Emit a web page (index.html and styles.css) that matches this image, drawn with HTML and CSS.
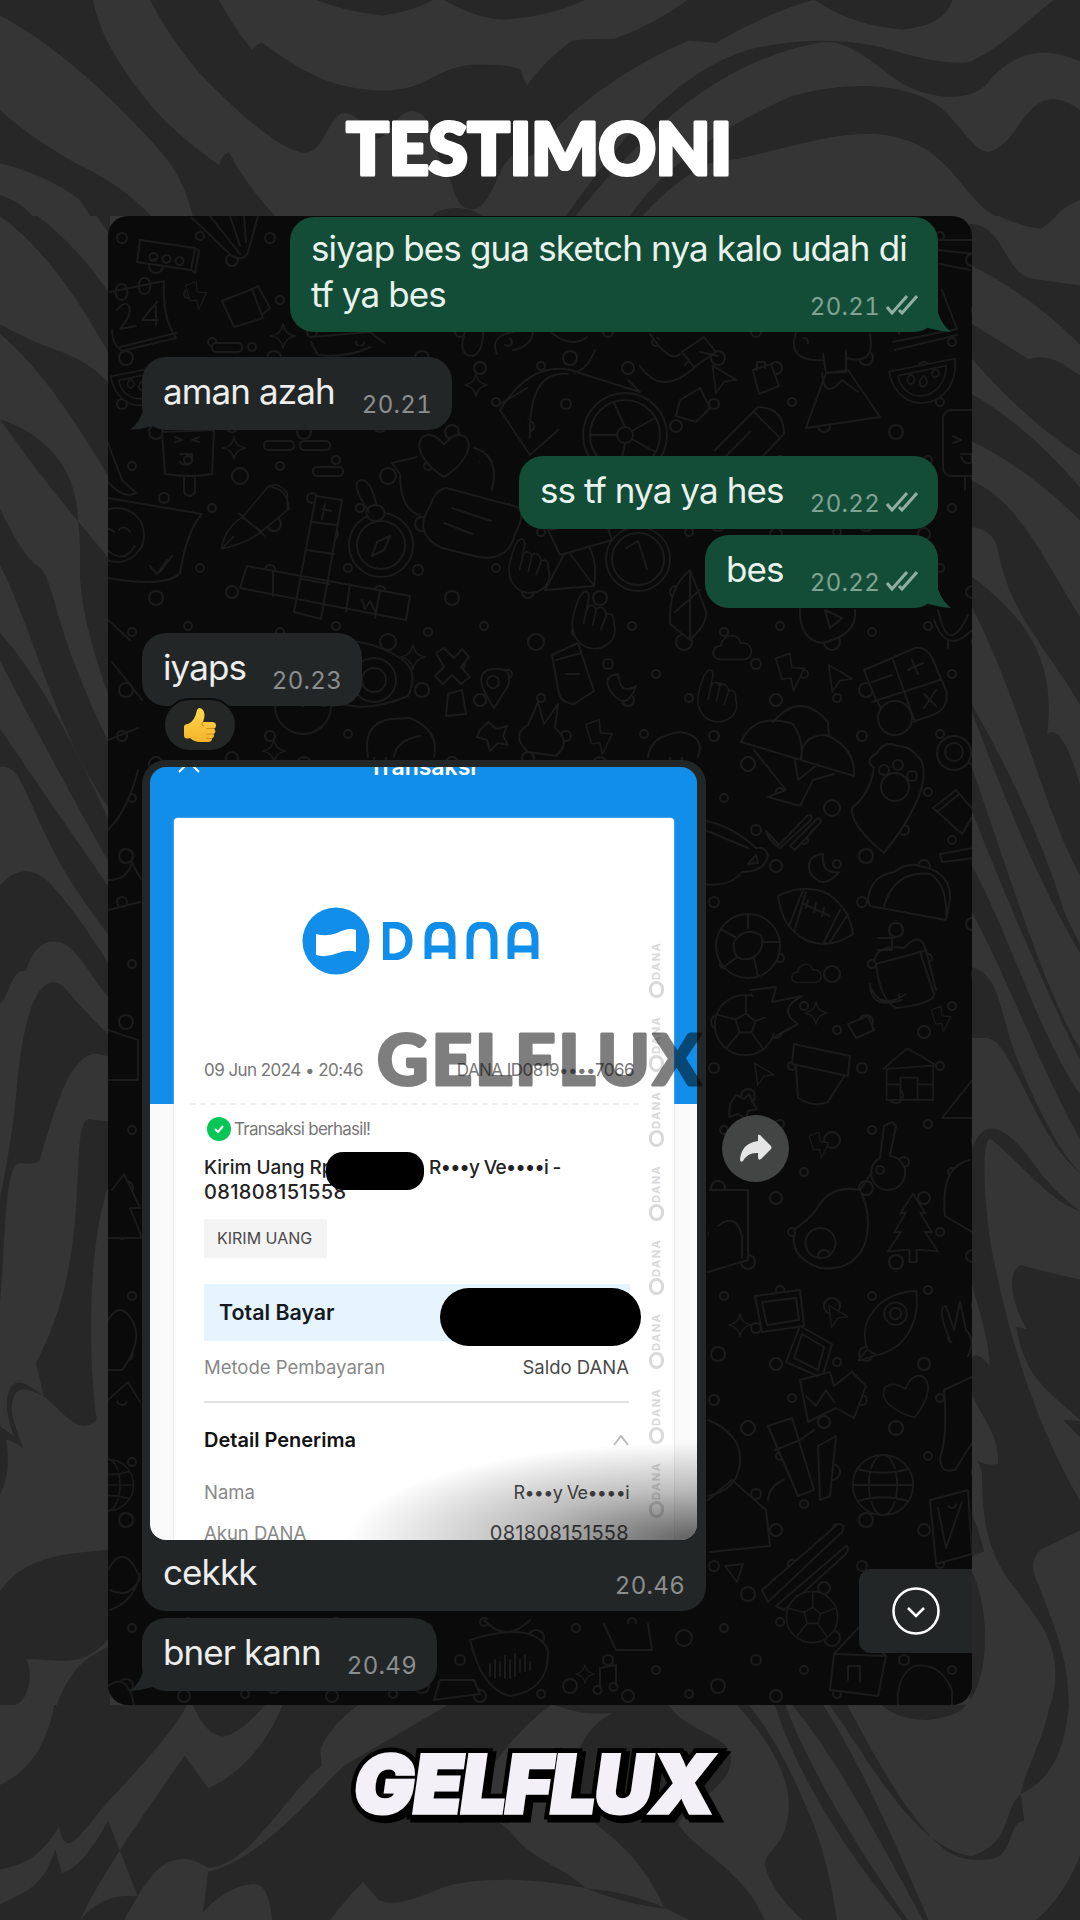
FILE: index.html
```html
<!DOCTYPE html>
<html lang="id">
<head>
<meta charset="utf-8">
<title>Testimoni Gelflux</title>
<link rel="stylesheet" href="styles.css">
</head>
<body>
<svg class="marble" width="1080" height="1920" aria-hidden="true">
  <svg x="0" y="0" width="1080" height="216" viewBox="0 0 1568 529.2" preserveAspectRatio="none">
    <path d="M0 0H135C145 90 180 180 225 270C260 335 295 375 318 405Q322 380 332 372Q360 460 400 530H280C270 460 255 410 225 355C150 215 70 100 0 38Z"/>
    <path d="M0 270C45 335 70 360 110 400Q175 450 220 530H131L116 490Q70 430 0 400ZM0 478Q30 495 48 530H0Z"/>
    <path d="M218 0H318Q340 70 366 122Q372 110 380 104C420 150 470 222 560 222C630 218 630 158 700 158Q740 158 755 170L765 210Q790 150 830 100Q850 95 892 95Q950 60 998 0H1180Q1110 35 1040 105L1000 100C920 155 830 260 790 350Q770 400 745 380C720 410 715 510 685 513C655 510 662 440 640 400C630 340 625 272 597 272C570 280 565 340 545 340C525 310 520 272 495 278C470 310 470 374 440 374C400 365 330 250 290 180Q245 90 218 0Z"/>
    <path d="M460 0Q500 28 555 38Q600 28 628 0ZM645 0Q690 45 730 48Q790 45 850 0ZM1183 0Q1240 65 1310 72Q1370 65 1383 0Z"/>
    <path d="M1530 0H1568V150C1500 100 1465 150 1440 190C1420 250 1360 250 1310 205C1270 160 1230 90 1190 105C1050 145 940 310 835 530H822C880 390 970 180 1090 120C1170 90 1240 95 1300 125C1350 150 1390 160 1410 150C1460 110 1490 50 1530 0Z"/>
    <path d="M915 530C960 410 1060 300 1150 235C1250 190 1330 210 1370 270C1400 320 1415 370 1435 372C1475 360 1485 243 1530 243Q1550 245 1568 270V490Q1540 510 1530 535H1450C1390 480 1380 340 1270 328C1190 325 1110 385 1030 400Q980 440 932 530ZM628 530C635 505 680 500 700 530Z"/>
  </svg>
  <svg x="0" y="216" width="110" height="1489" viewBox="0 14.6 330 1357.4" preserveAspectRatio="none">
    <path d="M0 0H40Q200 28 330 86V142Q160 48 0 15ZM240 0H330V32Q280 8 240 0ZM0 113Q70 126 180 138Q270 148 330 168V255Q150 160 0 122ZM0 200C120 212 230 240 235 293Q120 252 0 200M235 293L330 328V455Q250 390 240 345Q242 310 235 293"/>
    <path d="M0 282Q70 325 110 333C150 340 150 360 220 420Q270 460 330 497V556C210 505 130 430 80 390Q30 350 0 333ZM0 395Q140 440 330 568V606Q180 525 0 420ZM0 482Q130 540 330 628V672Q250 640 200 615C120 575 80 535 45 522Q20 515 0 517Z"/>
    <path d="M0 625C50 608 100 608 150 623Q220 645 330 698V728C270 710 230 675 160 676C120 676 95 687 78 703C35 700 30 725 0 733ZM0 910Q40 850 50 810C70 740 120 700 190 717Q260 742 330 762V782C230 765 180 810 120 875Q105 880 60 878C15 880 20 930 0 1005Z"/>
    <path d="M330 840L265 838C230 840 240 880 225 930C205 1000 150 1035 108 1060Q120 1075 130 1090C190 1105 240 1128 290 1112C265 1060 260 950 330 895ZM130 1090C90 1085 35 1075 35 1105Q45 1120 70 1138Q45 1132 18 1130Q35 1160 0 1180V1118L42 1127Q20 1110 20 1095C35 1065 90 1082 130 1090"/>
    <path d="M0 1268C80 1235 190 1235 330 1230V1310C250 1340 180 1330 78 1330C105 1345 80 1372 40 1372H0ZM330 1318C250 1330 200 1340 150 1390Q90 1430 0 1445V1500H330Z"/>
  </svg>
  <svg x="970" y="216" width="110" height="1489" viewBox="6 14.6 330 1357.4" preserveAspectRatio="none">
    <path d="M0 0Q150 26 220 26Q260 18 310 0ZM6 22C110 22 110 70 200 72L336 78V132Q190 87 6 59ZM6 112Q120 133 180 145C260 140 280 150 336 160V233Q170 200 6 143ZM6 176Q180 206 336 262V292Q180 245 6 219ZM6 255C160 275 240 335 336 380V460C230 405 130 380 90 320Q80 300 6 298Z"/>
    <path d="M6 342C150 375 250 410 242 470L238 487Q280 475 336 533V616C220 550 150 450 6 368ZM6 457Q200 560 290 650L336 679V686Q200 620 6 462ZM6 512C140 630 230 720 336 774V784Q170 680 6 553ZM6 604C120 665 210 760 336 815V856C230 800 120 710 6 646Z"/>
    <path d="M6 699C100 705 90 740 150 785Q250 860 336 887C190 850 130 760 50 764H6ZM6 872C40 830 120 845 200 880Q250 902 336 922C240 912 150 875 68 856C35 855 50 930 80 970C140 1060 230 1130 336 1186V1213L220 1230C190 1238 190 1248 205 1258C260 1300 302 1330 302 1370C300 1420 220 1442 157 1453C190 1400 262 1380 262 1345C262 1310 210 1295 140 1265C60 1235 42 1205 42 1160Q35 1152 25 1148Q50 1155 90 1152C95 1125 40 1110 6 1085V1060Q20 1045 65 1063C65 1040 30 1010 6 982Z"/>
    <path d="M6 1195Q25 1205 48 1232L6 1237ZM336 984Q200 975 160 971C120 975 120 1000 178 1030L145 1027C170 1075 240 1085 336 1112ZM285 1112L336 1113V1128ZM6 1247C65 1280 68 1340 6 1368Z"/>
  </svg>
  <svg x="0" y="1705" width="1080" height="215" viewBox="0 1041 1568 527" preserveAspectRatio="none">
    <path d="M79 1041H272C245 1120 200 1200 157 1277C130 1330 110 1385 97 1379Q88 1370 86 1339C60 1410 40 1430 0 1444V1237Q62 1190 79 1041ZM280 1041Q300 1118 325 1118Q350 1110 385 1041Z"/>
    <path d="M410 1041H520Q480 1090 465 1150L467 1190C420 1250 360 1440 302 1440C240 1370 210 1480 180 1568H116Q150 1500 200 1510L157 1325Q120 1440 90 1453L80 1396C60 1500 30 1500 0 1531V1568H116C150 1450 200 1330 268 1165L302 1245C350 1210 390 1130 410 1041Z"/>
    <path d="M650 1041H800C750 1100 710 1200 690 1250Q700 1300 740 1350C770 1420 820 1440 850 1490C760 1460 680 1465 640 1490Q560 1550 545 1510L527 1475Q500 1520 480 1568H395Q390 1480 370 1480C350 1480 320 1500 295 1550L302 1450C380 1420 460 1250 500 1190Q600 1090 650 1041ZM805 1041Q850 1070 890 1060C820 1120 820 1270 870 1340C920 1400 950 1480 965 1540Q910 1530 850 1490Q930 1500 1000 1568H1110C1080 1440 1000 1390 985 1330C1010 1270 1070 1230 1060 1160C1050 1110 1000 1110 970 1041Z"/>
    <path d="M1070 1041Q1150 1190 1145 1300C1140 1390 1115 1390 1110 1430Q1120 1500 1165 1568H1215Q1200 1390 1165 1270Q1130 1130 1087 1041ZM1125 1041Q1170 1280 1310 1568H1318Q1190 1260 1140 1041ZM1150 1041C1210 1160 1270 1350 1340 1568H1348C1280 1300 1240 1160 1195 1041ZM1205 1041C1270 1200 1330 1390 1410 1412C1470 1380 1455 1300 1482 1259L1487 1325C1460 1330 1475 1420 1430 1420Q1400 1425 1375 1400C1320 1330 1265 1150 1230 1041ZM1280 1041Q1300 1075 1345 1078Q1390 1070 1403 1041Z"/>
    <path d="M1568 1410Q1545 1510 1504 1568H1568ZM1552 1041C1545 1150 1530 1220 1482 1259C1490 1190 1515 1130 1524 1041Z"/>
  </svg>
</svg>

<main class="poster">
  <h1 class="title"><svg width="400" height="72" viewBox="0 0 400 72"><text x="6" y="59" textLength="386" lengthAdjust="spacing">TESTIMONI</text></svg></h1>

  <section class="chat">
    <svg class="doodles" viewBox="108 216 864 1489" aria-hidden="true">
      <defs>
        <pattern id="rings" width="148" height="166" patternUnits="userSpaceOnUse" patternTransform="translate(108 216)">
          <g class="ink"><circle cx="14" cy="22" r="5"/><circle cx="48" cy="50" r="7"/><circle cx="92" cy="20" r="4"/><circle cx="124" cy="44" r="6"/><circle cx="24" cy="84" r="4"/><circle cx="80" cy="78" r="4"/><circle cx="132" cy="94" r="8"/><circle cx="56" cy="116" r="5"/><circle cx="104" cy="126" r="4"/><circle cx="18" cy="142" r="7"/><circle cx="76" cy="152" r="6"/><circle cx="137" cy="150" r="4"/></g>
        </pattern>
        <symbol id="bolt" viewBox="0 0 36 46" overflow="visible"><path d="M2 8L18 2L20 18L34 19L22 44L19 30L9 31Z"/></symbol>
        <symbol id="spark" viewBox="0 0 30 30" overflow="visible"><path d="M15 1Q17 13 29 15Q17 17 15 29Q13 17 1 15Q13 13 15 1Z"/></symbol>
        <symbol id="cloud" viewBox="0 0 44 30" overflow="visible"><path d="M8 28C-2 27 0 13 9 14C12 0 28 0 30 11C42 8 46 26 34 28Z"/></symbol>
        <symbol id="cursor" viewBox="0 0 30 34" overflow="visible"><path d="M2 2L29 18L15 20L6 33Z"/></symbol>
        <symbol id="pen" viewBox="0 0 90 90" overflow="visible"><path d="M4 84Q8 60 28 48L58 12Q80 14 82 38L50 64Q34 78 4 84ZM28 48L50 64M4 84L18 70M24 43L54 69M58 12Q70 6 80 20V38"/></symbol>
        <symbol id="ball" viewBox="0 0 70 70" overflow="visible"><circle cx="35" cy="35" r="32"/><path d="M25 29L36 23L46 31L42 43H29ZM36 23V4M46 31L64 24M42 43L54 60M29 43L16 59M25 29L5 24"/></symbol>
        <symbol id="globe" viewBox="0 0 70 70" overflow="visible"><circle cx="35" cy="35" r="32"/><ellipse cx="35" cy="35" rx="15" ry="32"/><path d="M3 35H67M8 18Q35 26 62 18M8 52Q35 44 62 52"/></symbol>
        <symbol id="heart" viewBox="0 0 60 52" overflow="visible"><path d="M30 48C-16 18 10-12 30 14C50-12 76 18 30 48Z"/></symbol>
        <symbol id="hand" viewBox="0 0 60 70" overflow="visible"><path d="M14 62C-2 48 6 28 12 12Q20-1 23 10L20 26Q24 15 31 24Q38 18 42 30Q51 27 50 40C57 60 32 76 14 62ZM20 26L17 40M31 24L27 42M42 30L36 46"/></symbol>
        <symbol id="melon" viewBox="0 0 80 60" overflow="visible"><path d="M2 18L78 3C84 62 12 74 2 18ZM12 23L68 11C67 52 20 58 12 23M27 33q-8-4 0-12q9 7 0 12M41 36q-8-5 1-13q8 8-1 13M55 25q-8-5 1-10q8 6-1 10"/></symbol>
        <symbol id="house" viewBox="0 0 72 66" overflow="visible"><path d="M6 26L34 2L68 22M10 26V62H64V22M26 62V36H46V62M10 26L64 22M10 44H26M46 44H64"/></symbol>
        <symbol id="rocket" viewBox="0 0 70 80" overflow="visible"><path d="M12 66C0 32 30 4 64 4C68 40 50 66 22 72ZM12 66L2 78L22 72"/><circle cx="42" cy="28" r="12"/><circle cx="42" cy="28" r="6"/></symbol>
        <symbol id="tree" viewBox="0 0 60 80" overflow="visible"><path d="M30 2L44 24L38 23L51 45L43 44L58 66L34 64V78H26V64L2 66L17 44L9 45L22 23L16 24Z"/></symbol>
      </defs>
      <rect x="108" y="216" width="864" height="1489" fill="url(#rings)"/>
      <g class="ink">
        <path d="M140 240l55 8-4 22-54-8zM195 248l4 3-4 22-4-3M153 253a4 4 0 1 0 1 0M166 255a4 4 0 1 0 1 0M179 257a4 4 0 1 0 1 0"/>
        <path d="M192 218L232 256Q244 262 248 252L258 216M210 216L240 254M230 216L240 246M244 216L246 242"/>
        <path d="M110 292L164 281Q162 318 176 338L122 351Q112 345 112 330M120 347L176 333M121 284a6 8 0 1 0 1 0M144 278a6 8 0 1 0 1 0"/>
        <path d="M117 310Q125 300 129 306Q132 315 120 329L136 326M157 302L142 320H158M156 306V325"/>
        <use href="#bolt" x="184" y="280" width="24" height="31"/><path d="M222 301L252 289L263 318L234 327ZM252 289L258 286L270 308L263 314"/>
        <use href="#spark" x="270" y="322" width="26" height="28"/><rect x="212" y="343" width="30" height="9" rx="4"/><circle cx="252" cy="347" r="4"/>
        <path d="M311 337L370 332L384 343M311 342L318 355Q348 358 370 347M465 332q-8 24 8 24q10-4 10-24M497 354q-8-18 16-22M513 350q20-4 20-20"/>
        <use href="#melon" x="108" y="362" width="66" height="48"/><use href="#spark" x="464" y="372" width="24" height="26"/>
        <path d="M162 432L165 474Q190 478 212 474L214 430ZM184 478V492Q190 500 195 492V478M175 437l7 3-7 2M199 437l-7 3 7 2M180 454h12v8q-7 6-12 0"/>
        <use href="#spark" x="222" y="434" width="24" height="28"/><rect x="264" y="441" width="30" height="9" rx="4"/><rect x="300" y="441" width="30" height="9" rx="4"/><rect x="313" y="467" width="30" height="9" rx="4"/>
        <path d="M108 443L122 480L136 493Q124 500 108 482M108 498L202 514Q187 530 180 573Q166 588 108 578"/><circle cx="117" cy="535" r="27"/><path d="M150 566l7 8 10-14M160 572l12-16M104 532q5-6 10 0M119 530q5-6 11 2M105 548q18 18 30-2"/>
        <use href="#pen" x="216" y="476" width="82" height="78"/>
        <path d="M316 496L342 500L321 619L294 612ZM312 522l26 3M307 550l27 4M302 579l27 5M247 566L410 596L406 620L240 588ZM273 571v25M350 584l-4 27M380 590l-5 28M322 509l9 2M325 504l-3 15M362 600l3 9 5-8 5 10"/>
        <circle cx="381" cy="545" r="32"/><circle cx="381" cy="545" r="24"/><path d="M390 536L384 550L372 556L377 542ZM369 512q-20-30-8-32 10 0 15 24M375 505a9 8 0 1 0 1 0"/>
        <use href="#heart" x="414" y="431" width="60" height="50"/><path d="M392 463L417 457M420 515Q400 510 400 474L392 463M474 448Q500 455 492 490"/><path d="M446 488L514 506Q528 510 515 534Q508 562 478 557L442 548Q412 534 430 506Q435 490 446 488M452 508l39 13M444 523l28 11"/>
        <path d="M500 410Q530 362 570 370L640 392L628 380M530 438Q528 370 568 374M500 410L530 455L558 430M497 406l30-18"/><circle cx="625" cy="435" r="42"/><circle cx="625" cy="435" r="35"/><circle cx="625" cy="435" r="8"/><path d="M625 427L614 403M632 431L655 418M632 439L655 452M625 443L620 468M617 435H590"/>
        <path d="M552 333q20 16 35 4M595 350q-8 20-20 22M650 334q20 30 30 20M640 366q22 32 56 0M682 352l22-15 12 15-22 15zM700 352l18 4"/>
        <use href="#cursor" x="710" y="364" width="28" height="30"/><path d="M753 370l18-6 8 22-20 8zM757 370v-8h8v6"/>
        <path d="M680 400l20-12 10 20-14 14-20-6z"/><path d="M715 450L758 407Q784 408 784 434L740 480M754 412L780 438M750 432L726 456"/>
        <path d="M826 373L806 428L880 417L848 370ZM822 373Q824 396 836 386L842 380L858 392M823 354L826 373L846 372V350M796 332q-10 30 27 28M846 358q30 8 24-24"/>
        <use href="#melon" x="884" y="356" width="76" height="52"/><path d="M893 342L957 329L942 290M895 350L957 335"/><rect x="943" y="410" width="52" height="66" rx="8"/><path d="M965 476V490M953 436l8 4-8 3M961 454h11v8q-7 4-11-5M938 240H974M938 250L975 254M940 264L970 270"/>
        <path d="M545 590L576 532Q600 550 594 586ZM560 540L594 586"/><path d="M548 530L605 520L612 540L560 555Z"/><circle cx="638" cy="559" r="32"/><circle cx="638" cy="559" r="26"/><path d="M626 548l12-7 9 28"/>
        <use href="#hand" x="505" y="534" width="52" height="62"/><use href="#hand" x="568" y="586" width="55" height="66"/><use href="#hand" x="694" y="665" width="50" height="60"/>
        <path d="M670 624Q668 588 690 570L704 606Q712 620 690 640ZM690 570V640M675 612L700 590"/>
        <use href="#spark" x="400" y="640" width="26" height="34"/><path d="M342 640Q376 642 400 658Q420 670 408 696Q370 712 342 704"/><circle cx="374" cy="680" r="22"/><circle cx="374" cy="680" r="12"/>
        <path d="M436 653l8-5 10 10 8-9 7 8-8 10 9 10-9 7-9-9-9 9-8-8 9-9z"/><path d="M552 655l26-12 16 48-20 13q-12-1-15-10zM556 660l25-7M566 674h13"/><path d="M494 708Q472 676 488 670Q514 664 508 686Z"/><circle cx="493" cy="682" r="6"/><path d="M610 690q16 24 26-4q-16 10-18-12q-16 2-8 16M448 694l14-4 4 24-20 2z"/>
        <circle cx="303" cy="706" r="28"/><path d="M303 706l10-9M303 685v4M322 706h4"/><use href="#spark" x="262" y="738" width="24" height="26"/><path d="M368 757Q362 724 390 719L410 718Q440 730 434 757M394 757Q396 740 420 736"/><path d="M528 752Q510 735 528 725L538 702 544 724 558 704 555 728Q572 742 556 756Z"/><use href="#bolt" x="584" y="718" width="30" height="38"/><path d="M480 730l8-8 9 7 10-3-4 10 5 9-10-2-8 8-3-11-10-3z"/><path d="M648 757Q650 736 680 732Q706 736 698 757"/>
        <use href="#cloud" x="712" y="632" width="42" height="30"/><path d="M800 605Q798 640 822 643Q858 635 855 610M825 610L830 628L842 618Z"/><path d="M938 610Q948 658 968 615M934 620Q947 656 972 630M948 640v8"/>
        <use href="#bolt" x="774" y="650" width="32" height="44"/><use href="#cursor" x="827" y="663" width="26" height="30"/>
        <path d="M864 670L915 648Q926 646 932 658L946 690Q950 710 930 716L900 726Q884 715 876 700ZM893 660L915 722M872 702L940 680M908 670l15-7M912 660l6 14M924 694l12 12M936 690l-12 18M872 682l20-7"/><circle cx="895" cy="718" r="17"/>
        <path d="M741 742Q754 712 793 724Q804 740 801 760ZM773 722Q800 690 828 722L829 736M801 760Q800 735 826 735Q856 748 854 776ZM754 750L786 790L768 797L800 806L813 780L834 774M795 760L798 780L818 764"/>
        <path d="M874 768Q864 760 877 753Q884 740 898 746Q912 746 922 762Q932 792 884 853Q850 825 852 808Q870 794 874 768"/><circle cx="895" cy="787" r="14"/><circle cx="884" cy="770" r="5"/><circle cx="898" cy="765" r="5"/><circle cx="912" cy="776" r="5"/>
        <circle cx="954" cy="753" r="17"/><circle cx="954" cy="752" r="9"/><path d="M933 808L956 790L975 812L962 834ZM937 812L958 795M940 854L974 848V858L942 862Z"/>
        <path d="M766 831l13 14 28-29q6-3 4 4L780 848q-12-8-14-17M790 846l28-28q6 2-1 8L795 850z"/>
        <path d="M700 820Q730 824 756 848Q766 846 768 856Q764 872 742 872Q730 888 700 884M700 828L748 848M748 864l8-9 2 8z"/>
        <path d="M823 854q-18 2-13 18q12 20 29 0q-18 2-16-18"/><path d="M778 896Q806 882 830 895Q850 910 853 934Q830 950 806 940Q782 928 778 896ZM803 890L789 926M806 892L794 932M848 914L830 942M840 910L824 942M804 904L830 916M808 900l-2 8M816 903l-2 9M824 908l-2 8"/>
        <path d="M868 900Q870 876 894 872Q908 862 920 866Q952 872 950 900L946 920L870 906ZM884 906Q895 870 930 874Q948 884 946 920"/>
        <circle cx="748" cy="946" r="32"/><path d="M734 942Q744 926 761 935Q766 950 752 958Q732 964 734 942M748 914v14M778 942h-14M725 966l11-8M758 976l-4-18M722 930l13 7"/>
        <path d="M876 964L920 952L934 994Q934 1004 896 1008Q880 1000 876 964M920 952L926 950 936 990M874 962Q876 944 904 948Q920 930 926 950M878 938h14v12h-14M870 984Q870 1010 902 1000M872 990q10 20 34 4"/>
        <use href="#cloud" x="790" y="962" width="34" height="22"/><use href="#ball" x="712" y="992" width="66" height="66"/><path d="M750 990L776 987L772 1002L802 996Q776 1010 798 1024L776 1036"/><use href="#spark" x="804" y="1000" width="24" height="26"/><use href="#bolt" x="930" y="1004" width="22" height="30"/><path d="M848 1024l20-8 6 14-18 8z"/>
        <path d="M794 1044L850 1056L848 1076L792 1064ZM796 1066L798 1098Q814 1108 828 1102L845 1075"/><use href="#house" x="878" y="1042" width="62" height="66"/><use href="#cursor" x="752" y="1062" width="24" height="24"/>
        <path d="M942 1118L974 1078V1118Z"/><path d="M730 1104l6-9 8 4 5-5 4 9 4 6-9 2-2 8-8-5-9 3z"/><use href="#bolt" x="808" y="1130" width="22" height="30"/><path d="M884 1126l8-4 4 4-6 30a17 17 0 1 1-10 2z"/><circle cx="880" cy="1170" r="4"/>
        <path d="M816 1210Q830 1184 860 1190Q872 1214 866 1240Q856 1272 820 1268Q786 1256 796 1228Q806 1222 816 1210ZM820 1228a15 15 0 1 0 1 0M860 1190L872 1172M945 1216Q940 1166 970 1160M945 1216L972 1232"/>
        <use href="#tree" x="886" y="1190" width="54" height="76"/><path d="M710 1190H748V1260L708 1272M718 1226q18-14 24 10v22"/>
        <path d="M755 1296L800 1290L804 1326L762 1332ZM762 1302L796 1298L799 1320L767 1325ZM800 1326L832 1344L822 1378L786 1362ZM802 1334L824 1347L818 1370L794 1358Z"/><use href="#rocket" x="856" y="1286" width="66" height="78"/><path d="M950 1340Q936 1308 946 1306L954 1330 960 1302 966 1330Q976 1340 968 1356"/>
        <use href="#spark" x="728" y="1311" width="24" height="28"/><use href="#cursor" x="826" y="1304" width="24" height="24"/><path d="M800 1380l30-8 4 14 18-14 14 14-12 32-18-10-28 14zM806 1396l10 10 10-16 8 12"/>
        <use href="#heart" x="882" y="1376" width="54" height="46" transform="rotate(-18 909 1400)"/><path d="M944 1390L974 1376V1440L955 1470Q940 1474 940 1458Q948 1436 944 1390"/>
        <path d="M768 1426L792 1418L814 1490L798 1496ZM775 1450L800 1440 814 1430M784 1480Q770 1485 768 1500M818 1446L836 1436 830 1496 820 1500Z"/><use href="#globe" x="850" y="1450" width="66" height="70"/><path d="M708 1420q34 14 32 42t-32 34M708 1500l24-20 34 30 4 36-60 6"/><path d="M930 1500L968 1490 972 1554 936 1564ZM938 1508l8 40 16-46"/>
        <path d="M762 1590L838 1524Q846 1524 842 1532L768 1602ZM776 1606L846 1546Q850 1548 846 1554L784 1610Z"/><use href="#ball" x="784" y="1588" width="56" height="58"/><path d="M725 1566l18-2-6 18z"/>
        <use href="#globe" x="80" y="1452" width="56" height="66"/><path d="M108 1570Q124 1540 140 1578Q130 1600 110 1590M110 1610q24-8 30-36"/>
        <path d="M470 1640Q534 1620 548 1650Q550 1690 510 1696Q482 1690 470 1640ZM490 1664v12M495 1660v18M500 1662v14M505 1656v22M510 1660v18M515 1654v22M520 1660v12M525 1655v16M530 1662v8"/>
        <path d="M484 1620q22 24 46 0M604 1624l12 26 36 0-4-26M830 1690L834 1654 858 1628 886 1656 878 1696ZM834 1654L886 1656M848 1680v-14h12v16M600 1668v20M600 1668l16-3v20M597 1686a4 4 0 1 0 1 0M613 1683a4 4 0 1 0 1 0"/><use href="#spark" x="575" y="1664" width="20" height="20"/>
        <path d="M898 1705Q896 1676 914 1666 940 1662 952 1690V1705M434 1700l6-20h34l6 14zM108 1686q20-14 26 19"/>
        <path d="M108 620L130 640M112 662L142 700M108 740l30-12M108 830q20-20 30-60M108 880q20 0 24-18 10 22 14 20M108 910l32-8M108 1030l30 10v40h-30M112 1190l12-16 16 34-10 0 12 30h-34M108 1320q12-20 24 0t-10 50l-14 0M108 1400l20-18 12 20"/>
      </g>
    </svg>

    <div class="bubble out first">
      <p class="msg">siyap bes gua sketch nya kalo udah di<br>tf ya bes</p>
      <span class="time">20.21</span><svg class="ticks" viewBox="0 0 32 20"><path d="M1 12L6 18L21 1M13 15L16 18L31 1"/></svg>
      <svg class="tail right" viewBox="0 0 26 28"><path d="M13 0V9Q17 21 26 28Q14 27 3 24L0 16Z"/></svg>
    </div>
    <div class="bubble in b2">
      <p class="msg">aman azah</p><span class="time">20.21</span>
      <svg class="tail left" viewBox="0 0 26 28"><path d="M13 0V9Q9 21 0 28Q12 27 23 24L26 16Z"/></svg>
    </div>
    <div class="bubble out b3">
      <p class="msg">ss tf nya ya hes</p><span class="time">20.22</span><svg class="ticks" viewBox="0 0 32 20"><path d="M1 12L6 18L21 1M13 15L16 18L31 1"/></svg>
    </div>
    <div class="bubble out b4">
      <p class="msg">bes</p><span class="time">20.22</span><svg class="ticks" viewBox="0 0 32 20"><path d="M1 12L6 18L21 1M13 15L16 18L31 1"/></svg>
      <svg class="tail right" viewBox="0 0 26 28"><path d="M13 0V9Q17 21 26 28Q14 27 3 24L0 16Z"/></svg>
    </div>
    <div class="bubble in b5">
      <p class="msg">iyaps</p><span class="time">20.23</span>
      <span class="reaction"><svg width="34" height="36" viewBox="0 0 34 36">
        <defs><linearGradient id="skin" x2="0" y2="1"><stop stop-color="#ffd84e"/><stop offset="1" stop-color="#f6b32b"/></linearGradient></defs>
        <path fill="url(#skin)" d="M14 3Q16-1 20 3Q23 7 20 15H29Q33 15 33 18.500Q33 21 31 21.500Q34 25 30.500 27Q32 30 29 31.500Q29 35 25 35H17Q11 35 7 31Q1 33 1 28V20Q1 17 5 17Q12 14 14 3Z"/>
        <path class="crease" d="M31 21.500H23M30.500 27H23M29 31.500H23M20 15Q17 18 21 19"/></svg></span>
    </div>

    <article class="bubble photo">
      <div class="shot">
        <div class="appbar"><svg width="22" height="22" viewBox="0 0 22 22"><path d="M1 1L21 21M21 1L1 21"/></svg><span>Transaksi</span></div>
        <div class="receipt">
          <div class="brand">
            <svg width="68" height="68" viewBox="0 0 68 68"><circle cx="34" cy="34" r="33.500" fill="#118eea"/><path fill="#fff" d="M14 27Q24 30 35 26Q47 20 54 23V45Q47 42 36 46Q24 51 14 48Z"/></svg>
            <svg class="wordmark" role="img" aria-label="DANA" width="157" height="38" viewBox="0 0 157 38"><path d="M3 3H12Q26 5 26 19T12 35H3ZM45 37V17Q45 3 57 3T69 17V37M45 27H69M87 37V17Q87 3 99 3T111 17V37M128 37V17Q128 3 140 3T152 17V37M128 27H152"/></svg>
          </div>
          <div class="meta"><span>09 Jun 2024 • 20:46</span><span>DANA ID0819••••7066</span></div>
          <div class="ok"><svg width="24" height="24" viewBox="0 0 24 24"><circle cx="12" cy="12" r="12" fill="#06c755"/><path d="M8 12L11 15L16 9" fill="none" stroke="#fff" stroke-width="2"/></svg><span>Transaksi berhasil!</span></div>
          <div class="summary"><span>Kirim Uang Rp</span><i class="redact small"></i><span class="payee">R•••y Ve••••i -</span><br><span class="phone">081808151558</span></div>
          <div class="chip">KIRIM UANG</div>
          <div class="total"><span>Total Bayar</span><i class="redact"></i></div>
          <div class="row method"><span class="muted">Metode Pembayaran</span><span>Saldo DANA</span></div>
          <div class="row detail"><b>Detail Penerima</b><svg width="16" height="11" viewBox="0 0 16 11"><path d="M1 10L8 1L15 10"/></svg></div>
          <div class="row name"><span class="muted">Nama</span><span class="masked">R•••y Ve••••i</span></div>
          <div class="row account"><span class="muted">Akun DANA</span><span class="number">081808151558</span></div>
          <div class="strip"><span>DANA</span><i></i><span>DANA</span><i></i><span>DANA</span><i></i><span>DANA</span><i></i><span>DANA</span><i></i><span>DANA</span><i></i><span>DANA</span><i></i><span>DANA</span><i></i></div>
        </div>
        <div class="shade"></div>
      </div>
      <div class="caption"><p class="msg">cekkk</p><span class="time">20.46</span></div>
      <svg class="watermark" width="336" height="66" viewBox="0 0 336 66"><text x="5" y="57" textLength="324" lengthAdjust="spacing">GELFLUX</text></svg>
      <span class="share"><svg width="32" height="29" viewBox="0 0 32 29"><path d="M18 1Q20 0 21 2L31 12Q32 14 31 15L21 25Q18 27 18 23V19Q8 18 3 27Q0 29 0 25Q2 9 18 7Z"/></svg></span>
    </article>

    <div class="bubble in b7">
      <p class="msg">bner kann</p><span class="time">20.49</span>
      <svg class="tail left" viewBox="0 0 26 28"><path d="M13 0V9Q9 21 0 28Q12 27 23 24L26 16Z"/></svg>
    </div>
    <span class="down"><svg width="50" height="50" viewBox="0 0 50 50"><circle cx="25" cy="25" r="22.500"/><path d="M17 22L25 30L33 22"/></svg></span>
  </section>

  <footer class="logo"><svg width="400" height="90" viewBox="0 0 400 90">
    <g transform="translate(11 74) skewX(-8)"><text class="back" x="4" y="3" textLength="360" lengthAdjust="spacing">GELFLUX</text><text class="back" x="0" y="0" textLength="360" lengthAdjust="spacing">GELFLUX</text><text class="front" x="0" y="0" textLength="360" lengthAdjust="spacing">GELFLUX</text></g>
  </svg></footer>
</main>
</body>
</html>
```
FILE: styles.css
```css
* { box-sizing: border-box; }
body { margin: 0; width: 1080px; height: 1920px; overflow: hidden; background: #353535; font-family: Inter, "Liberation Sans", sans-serif; }
p, h1 { margin: 0; font-weight: 400; }
.marble { position: absolute; inset: 0; fill: #272727; }
.poster { position: relative; display: flex; flex-direction: column; align-items: center; height: 1920px; }
.title { height: 216px; padding-top: 116px; }
.title svg { display: block; overflow: visible; }
.title text { font: 800 71px Lato, sans-serif; fill: #fff; stroke: #fff; stroke-width: 3; stroke-linejoin: round; }

.chat { position: relative; width: 864px; height: 1489px; background: #0a0a0a; border-radius: 20px; overflow: hidden; display: flex; flex-direction: column; align-items: flex-start; padding: 1px 34px 0; }
.doodles { position: absolute; inset: 0; width: 864px; height: 1489px; }
.ink { fill: #0a0a0a; stroke: #1b1b1b; stroke-width: 2; stroke-linejoin: round; stroke-linecap: round; }

.bubble { position: relative; display: flex; align-items: flex-end; height: 73px; border-radius: 24px; background: #222626; color: #eceeee; padding: 0 20px 13px 21px; flex: none; }
.bubble.out { align-self: flex-end; background: #144d37; color: #e9f3ee; padding: 0 20px 13px 21px; }
.msg { font-size: 35px; line-height: 46px; letter-spacing: -.9px; white-space: nowrap; flex: 1; padding-bottom: 3px; }
.time { font-size: 24px; line-height: 24px; letter-spacing: .3px; font-variant-numeric: tabular-nums; color: #8b8e8e; }
.out .time { color: #7fa494; margin-right: 6px; }
.out .msg { padding-bottom: 3px; }
.ticks { width: 32px; height: 20px; margin-bottom: 4px; fill: none; stroke: #8fb0a2; stroke-width: 3; }
.tail { position: absolute; bottom: 0; width: 26px; height: 28px; fill: #222626; }
.tail.right { right: -13px; fill: #144d37; }
.tail.left { left: -12px; }
.bubble.first { width: 648px; height: 115px; }
.first .msg { padding: 8px 0 0; align-self: flex-start; width: 0; letter-spacing: -.86px; }
.b2 { width: 310px; margin-top: 25px; }
.b3 { width: 419px; margin-top: 26px; }
.b4 { width: 233px; margin-top: 6px; }
.b5 { width: 220px; margin-top: 25px; }
.reaction { position: absolute; left: 21px; top: 65px; width: 74px; height: 54px; border: 2px solid #0a0a0a; border-radius: 27px; background: #252727; display: grid; place-items: center; }
.crease { fill: none; stroke: #d98e1d; stroke-width: 1.2; }

.photo { display: block; width: 564px; height: 851px; margin-top: 54px; padding: 7px 9px 0 8px; }
.shot { position: relative; width: 547px; height: 773px; border-radius: 16px; overflow: hidden; background: linear-gradient(#118eea 337px, #f9f9f9 337px); }
.appbar { position: relative; height: 51px; color: #fff; font-size: 23px; font-weight: 600; text-align: center; }
.appbar span { display: block; height: 9px; line-height: 0; overflow: hidden; padding-right: 2px; }
.appbar svg { position: absolute; left: 28px; top: -16px; fill: none; stroke: #fff; stroke-width: 2; }
.receipt { position: relative; margin-left: 24px; width: 500px; height: 725px; background: #fff; border-radius: 4px; padding-left: 30px; color: #4a4a4a; font-size: 18px; box-shadow: 0 0 2px #ccd; white-space: nowrap; }
.brand { display: flex; align-items: center; gap: 13px; padding: 89px 0 0 98px; height: 157px; }
.wordmark { fill: none; stroke: #118eea; stroke-width: 7; }
.meta { display: flex; justify-content: space-between; width: 430px; margin-top: 84px; line-height: 22px; font-size: 17px; letter-spacing: -.55px; color: #777; }
.ok { display: flex; gap: 3px; align-items: center; width: 449px; margin: 22px 0 0 -14px; padding: 12px 0 0 17px; border-top: 2px dashed #eee; color: #777; font-size: 17px; letter-spacing: -.75px; line-height: 24px; }
.summary { margin-top: 15px; line-height: 24px; height: 49px; font-size: 19px; font-weight: 500; color: #222; position: relative; }
.redact { position: absolute; background: #000; border-radius: 29px; width: 201px; height: 58px; left: 236px; top: 4px; }
.redact.small { left: 122px; top: -4px; width: 98px; height: 38px; border-radius: 17px; z-index: 1; }
.payee { position: absolute; left: 225px; letter-spacing: -.65px; }
.phone { font-size: 20px; letter-spacing: .35px; }
.chip { width: 123px; height: 39px; background: #f4f4f4; margin-top: 14px; padding-left: 13px; line-height: 39px; font-size: 16px; }
.total { position: relative; width: 426px; height: 57px; margin-top: 26px; background: #e6f4fd; padding-left: 15px; line-height: 57px; font-size: 21.4px; font-weight: 600; color: #151a20; }
.row { display: flex; justify-content: space-between; align-items: center; width: 425px; height: 24px; font-size: 18.500px; }
.muted { color: #888; }
.method { margin-top: 14px; height: 48px; padding-bottom: 23px; border-bottom: 2px solid #e2e2e2; }
.detail { margin-top: 25px; color: #111; font-size: 20px; }
.detail b { font-weight: 600; }
.detail svg { fill: none; stroke: #bbb; stroke-width: 2; }
.name { margin-top: 28px; }
.masked { font-size: 18px; letter-spacing: -.65px; }
.account { margin-top: 17px; }
.number { font-size: 20px; letter-spacing: .3px; }
.strip { position: absolute; left: 475px; top: 124px; width: 14px; display: flex; flex-direction: column; align-items: center; color: #d9d9d9; }
.strip span { writing-mode: vertical-rl; transform: rotate(180deg); font-size: 11px; font-weight: 700; letter-spacing: 1.5px; line-height: 14px; height: 38px; }
.strip i { width: 15px; height: 17px; border: 3px solid #d9d9d9; border-radius: 8px; margin: 1px 0 18.300px; flex: none; }
.shade { position: absolute; inset: 0; background: radial-gradient(ellipse 350px 98px at 100% 100%, rgba(0,0,0,.62), rgba(0,0,0,.26) 50%, transparent); }
.caption { display: flex; align-items: flex-end; height: 71px; padding: 0 12px 13px 13px; }
.caption .msg { padding-bottom: 3px; }
.watermark { position: absolute; left: 230px; top: 268px; opacity: .5; overflow: visible; }
.watermark text { font: 900 71px Lato, sans-serif; fill: #000; stroke: #000; stroke-width: 3; stroke-linejoin: round; }
.share { position: absolute; left: 580px; top: 355px; width: 67px; height: 67px; border-radius: 50%; background: #434444; display: grid; place-items: center; fill: #e5e5e5; }
.b7 { width: 295px; margin-top: 7px; }
.down { position: absolute; right: 0; top: 1353px; width: 113px; height: 84px; border-radius: 12px 0 0 12px; background: #222626; display: grid; place-items: center; fill: none; stroke: #fff; stroke-width: 2.6; }

.logo { padding-top: 34px; }
.logo svg { display: block; overflow: visible; }
.logo text { font: 900 80px Inter, sans-serif; stroke-linejoin: miter; stroke-miterlimit: 3; }
.logo .back { fill: #000; stroke: #000; stroke-width: 13; }
.logo .front { fill: #f3f1f7; stroke: #f3f1f7; stroke-width: 3.5; }
```
